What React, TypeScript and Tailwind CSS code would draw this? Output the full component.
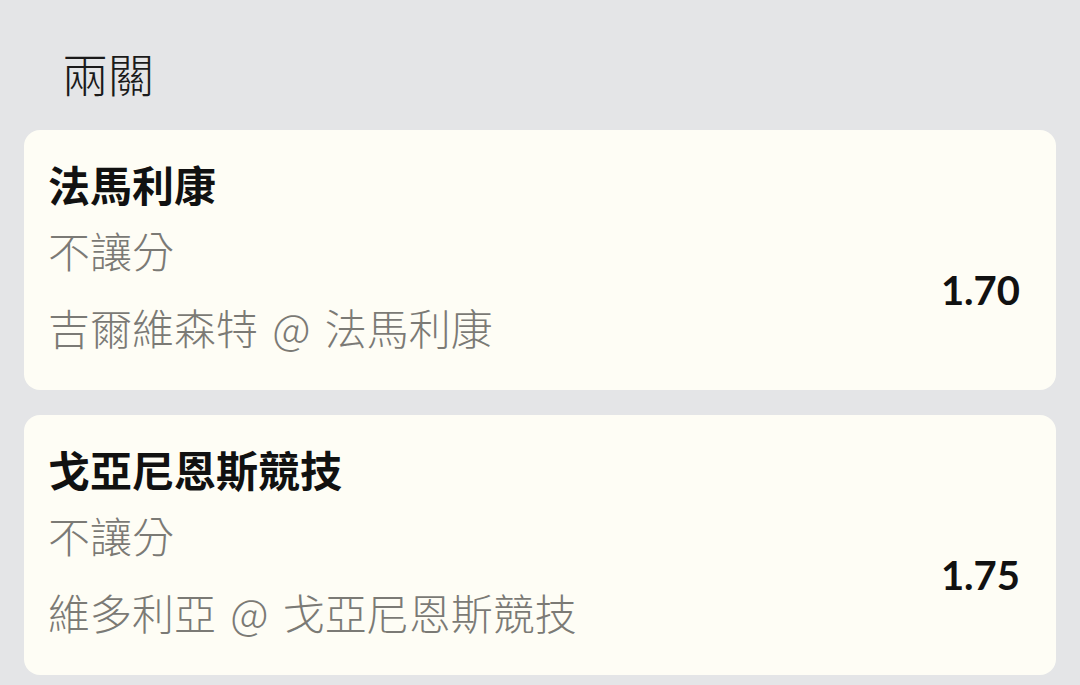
const legs = [
  { team: "法馬利康", market: "不讓分", match: "吉爾維森特 @ 法馬利康", odds: "1.70" },
  { team: "戈亞尼恩斯競技", market: "不讓分", match: "維多利亞 @ 戈亞尼恩斯競技", odds: "1.75" },
];

const cjk = { fontFamily: '"Noto Sans CJK TC", "Noto Sans", sans-serif' };

export default function App() {
  return (
    <div className="min-h-screen w-full bg-[#e4e5e7] px-6 pt-[40px]" style={cjk}>
      <h1 className="pl-[38px] text-[46px] font-light leading-[64px] text-[#1a1a1a]">兩關</h1>

      <div className="mt-[26px] flex flex-col gap-[25px]">
        {legs.map((leg) => (
          <div key={leg.team} className="flex h-[260px] flex-col rounded-2xl bg-[#fefdf5] pl-6 pr-9 pt-[26px]">
            <div className="text-[42px] font-bold leading-[56px] text-[#111]">{leg.team}</div>
            <div className="flex items-center justify-between">
              <div className="flex flex-col text-[42px] font-light text-[#7b7a75]">
                <span className="mt-[10px] leading-[56px]">{leg.market}</span>
                <span className="mt-[21px] leading-[56px] [word-spacing:5px]">{leg.match}</span>
              </div>
              <span
                className="pt-[12px] text-[40px] font-bold text-[#111]"
                style={{ fontFamily: "Lato, sans-serif" }}
              >
                {leg.odds}
              </span>
            </div>
          </div>
        ))}
      </div>
    </div>
  );
}
